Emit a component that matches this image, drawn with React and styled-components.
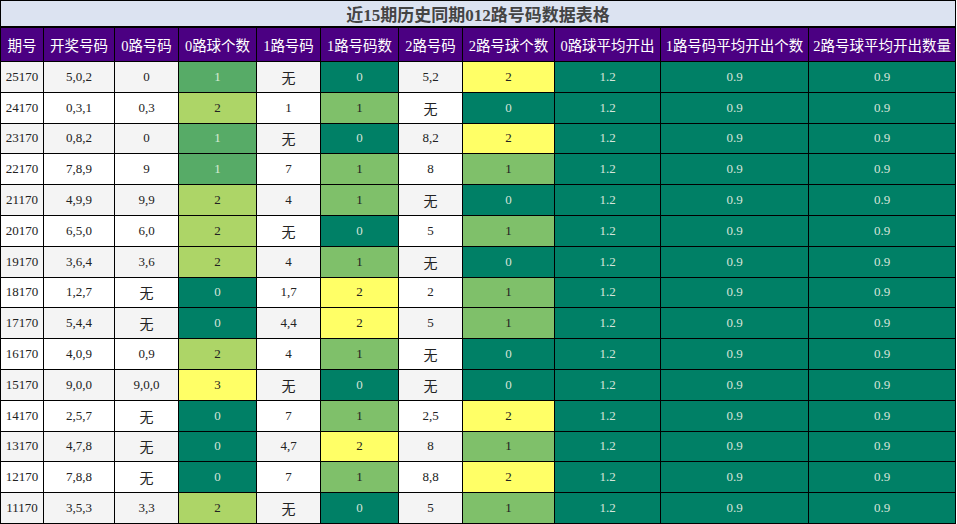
import React from 'react';
import styled, { createGlobalStyle } from 'styled-components';

const GlobalStyle = createGlobalStyle`
    body {
        margin: 0;
        background: #fff;
        font-family: "Liberation Serif", "Noto Sans CJK SC", serif;
    }
`;

const Table = styled.table`
    width: 955px;
    table-layout: fixed;
    border-collapse: collapse;
    font-family: "Liberation Serif", "Noto Sans CJK SC", serif;
`;

const Title = styled.th`
    height: 24px;
    background-color: #DCE3F1;
    border: 1px solid #000;
    border-bottom-width: 2px;
    color: #444;
    font-size: 17px;
    font-weight: 700;
    text-align: center;
    padding: 0;
`;

const HeadCell = styled.th`
    height: 33px;
    background-color: #4B0082;
    color: #fff;
    border: 1px solid #000;
    font-size: 14.5px;
    font-weight: 400;
    padding: 0;
    white-space: nowrap;
`;

const Row = styled.tr`
    height: 30.8px;
    background-color: ${p => (p.$odd ? '#F4F4F4' : '#fff')};
`;

// 颜色
const tones = {
    teal: { bg: '#008066', fg: '#D6E4DA' },
    mid: { bg: '#57AB67', fg: '#D8EBD4' },
    light: { bg: '#ADD567', fg: '#222' },
    green: { bg: '#7FC06A', fg: '#222' },
    yellow: { bg: '#FFFF66', fg: '#222' },
};

const Cell = styled.td`
    border: 1px solid #000;
    padding: 0;
    text-align: center;
    font-size: 13px;
    color: ${p => (p.$tone ? tones[p.$tone].fg : '#222')};
    background-color: ${p => (p.$tone ? tones[p.$tone].bg : 'transparent')};
`;

const None = styled.span`
    font-family: "Noto Sans CJK SC", sans-serif;
    font-size: 14px;
`;

const cols = [43, 71, 64, 78, 64, 78, 64, 92, 106, 148, 147];
const heads = ['期号', '开奖号码', '0路号码', '0路球个数', '1路号码', '1路号码数', '2路号码', '2路号球个数', '0路球平均开出', '1路号码平均开出个数', '2路号球平均开出数量'];

const rows = [
    ['25170', '5,0,2', '0', 1, '无', 0, '5,2', 2],
    ['24170', '0,3,1', '0,3', 2, '1', 1, '无', 0],
    ['23170', '0,8,2', '0', 1, '无', 0, '8,2', 2],
    ['22170', '7,8,9', '9', 1, '7', 1, '8', 1],
    ['21170', '4,9,9', '9,9', 2, '4', 1, '无', 0],
    ['20170', '6,5,0', '6,0', 2, '无', 0, '5', 1],
    ['19170', '3,6,4', '3,6', 2, '4', 1, '无', 0],
    ['18170', '1,2,7', '无', 0, '1,7', 2, '2', 1],
    ['17170', '5,4,4', '无', 0, '4,4', 2, '5', 1],
    ['16170', '4,0,9', '0,9', 2, '4', 1, '无', 0],
    ['15170', '9,0,0', '9,0,0', 3, '无', 0, '无', 0],
    ['14170', '2,5,7', '无', 0, '7', 1, '2,5', 2],
    ['13170', '4,7,8', '无', 0, '4,7', 2, '8', 1],
    ['12170', '7,8,8', '无', 0, '7', 1, '8,8', 2],
    ['11170', '3,5,3', '3,3', 2, '无', 0, '5', 1],
];

const zeroTone = ['teal', 'mid', 'light', 'yellow'];
const otherTone = ['teal', 'green', 'yellow'];

const Text = ({ v }) => (v === '无' ? <None>无</None> : v);

const App = () => {
    return (
        <>
            <GlobalStyle />
            <Table>
                <colgroup>
                    {cols.map((w, i) => <col key={i} style={{ width: w }} />)}
                </colgroup>
                <thead>
                    <tr>
                        <Title colSpan={11}>近15期历史同期012路号码数据表格</Title>
                    </tr>
                    <tr>
                        {heads.map(h => <HeadCell key={h}>{h}</HeadCell>)}
                    </tr>
                </thead>
                <tbody>
                    {rows.map((r, i) => (
                        <Row key={r[0]} $odd={i % 2 === 0}>
                            <Cell>{r[0]}</Cell>
                            <Cell>{r[1]}</Cell>
                            <Cell><Text v={r[2]} /></Cell>
                            <Cell $tone={zeroTone[r[3]]}>{r[3]}</Cell>
                            <Cell><Text v={r[4]} /></Cell>
                            <Cell $tone={otherTone[r[5]]}>{r[5]}</Cell>
                            <Cell><Text v={r[6]} /></Cell>
                            <Cell $tone={otherTone[r[7]]}>{r[7]}</Cell>
                            <Cell $tone="teal">1.2</Cell>
                            <Cell $tone="teal">0.9</Cell>
                            <Cell $tone="teal">0.9</Cell>
                        </Row>
                    ))}
                </tbody>
            </Table>
        </>
    );
};

export default App;
